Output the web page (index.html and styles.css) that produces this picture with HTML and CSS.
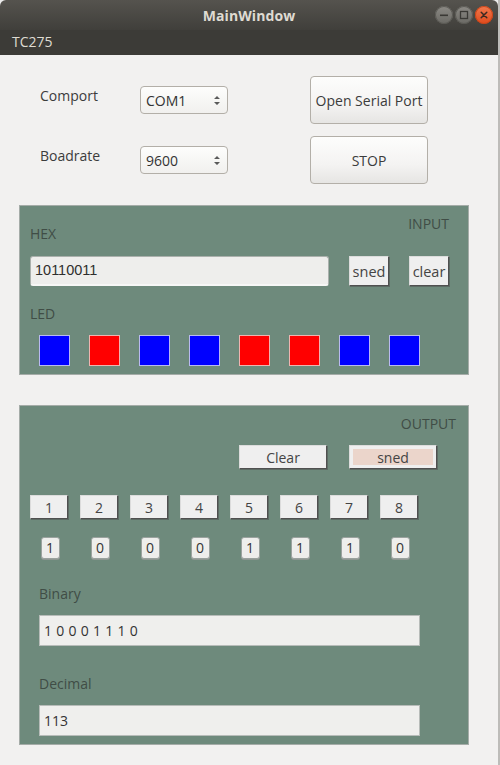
FILE: index.html
```html
<!DOCTYPE html>
<html>
<head>
<meta charset="utf-8">
<title>MainWindow</title>
<link rel="stylesheet" href="styles.css">
</head>
<body>
<div class="screen">
  <div class="window">
    <header class="titlebar">
      <div></div>
      <div class="title">MainWindow</div>
      <div class="controls">
        <span class="wbtn min"><svg width="18" height="18" viewBox="0 0 18 18"><rect x="5" y="8.5" width="8" height="1.6" fill="#3a3935"/></svg></span>
        <span class="wbtn max"><svg width="18" height="18" viewBox="0 0 18 18"><rect x="5.5" y="5.5" width="7" height="7" fill="none" stroke="#3a3935" stroke-width="1.3"/></svg></span>
        <span class="wbtn close"><svg width="18" height="18" viewBox="0 0 18 18"><path d="M6.2 6.2 L11.8 11.8 M11.8 6.2 L6.2 11.8" stroke="#3a2a22" stroke-width="1.5" stroke-linecap="round"/></svg></span>
      </div>
    </header>
    <nav class="menubar"><span class="menu-item">TC275</span></nav>

    <main class="content">
      <section class="settings">
        <div class="lbl">Comport</div>
        <div class="combo"><span>COM1</span><svg class="spin" width="8" height="13" viewBox="0 0 8 13"><path d="M1 5 L4 2 L7 5 Z M1 8 L4 11 L7 8 Z" fill="#5a5a5a"/></svg></div>
        <button class="big-btn">Open Serial Port</button>

        <div class="lbl">Boadrate</div>
        <div class="combo"><span>9600</span><svg class="spin" width="8" height="13" viewBox="0 0 8 13"><path d="M1 5 L4 2 L7 5 Z M1 8 L4 11 L7 8 Z" fill="#5a5a5a"/></svg></div>
        <button class="big-btn">STOP</button>
      </section>

      <section class="panel input-panel">
        <div class="in-head">
          <span class="plabel hex">HEX</span>
          <span class="plabel">INPUT</span>
        </div>
        <div class="in-row">
          <div class="hex-field">10110011</div>
          <button class="flat-btn small">sned</button>
          <button class="flat-btn small">clear</button>
        </div>
        <div class="plabel led-label">LED</div>
        <div class="leds">
          <span class="led blue"></span>
          <span class="led red"></span>
          <span class="led blue"></span>
          <span class="led blue"></span>
          <span class="led red"></span>
          <span class="led red"></span>
          <span class="led blue"></span>
          <span class="led blue"></span>
        </div>
      </section>

      <section class="panel output-panel">
        <div class="out-head"><span class="plabel">OUTPUT</span></div>
        <div class="out-actions">
          <button class="flat-btn wide">Clear</button>
          <button class="flat-btn wide pink">sned</button>
        </div>
        <div class="bits">
          <button class="flat-btn bit">1</button>
          <button class="flat-btn bit">2</button>
          <button class="flat-btn bit">3</button>
          <button class="flat-btn bit">4</button>
          <button class="flat-btn bit">5</button>
          <button class="flat-btn bit">6</button>
          <button class="flat-btn bit">7</button>
          <button class="flat-btn bit">8</button>
        </div>
        <div class="vals">
          <span class="cell"><span class="val">1</span></span>
          <span class="cell"><span class="val">0</span></span>
          <span class="cell"><span class="val">0</span></span>
          <span class="cell"><span class="val">0</span></span>
          <span class="cell"><span class="val">1</span></span>
          <span class="cell"><span class="val">1</span></span>
          <span class="cell"><span class="val">1</span></span>
          <span class="cell"><span class="val">0</span></span>
        </div>
        <div class="plabel field-label first">Binary</div>
        <div class="field binary">1 0 0 0 1 1 1 0</div>
        <div class="plabel field-label">Decimal</div>
        <div class="field">113</div>
      </section>
    </main>
  </div>
  <div class="edge"></div>
</div>
</body>
</html>
```

FILE: styles.css
```css
* { box-sizing: border-box; }

html, body {
  margin: 0;
  padding: 0;
  background: #ececec;
}

body {
  font-family: "Open Sans", "Noto Sans", sans-serif;
  font-size: 14px;
  color: #3c3c3c;
}

.screen {
  display: flex;
  width: 500px;
  height: 765px;
  overflow: hidden;
}

.window {
  width: 498px;
  height: 765px;
  background: #f2f1f0;
  border-radius: 6px 6px 0 0;
  overflow: hidden;
}

.edge {
  width: 2px;
  height: 765px;
  background: #bdbcb9;
}

/* title bar */
.titlebar {
  height: 30px;
  display: grid;
  grid-template-columns: 1fr auto 1fr;
  align-items: center;
  background: linear-gradient(#55534e, #403f3b);
}

.title {
  font-weight: bold;
  font-size: 14px;
  color: #dfdbd2;
  letter-spacing: 0.1px;
}

.controls {
  justify-self: end;
  display: flex;
  gap: 2px;
  padding-right: 5px;
}

.wbtn {
  width: 18px;
  height: 18px;
  border-radius: 50%;
  display: flex;
  background: linear-gradient(#8c8a85, #6a6964);
  box-shadow: inset 0 0 0 1px #5a5954;
}

.wbtn.close {
  background: linear-gradient(#f27a4e, #df4a1c);
  box-shadow: inset 0 0 0 1px #c84418;
}

.menubar {
  height: 25px;
  background: #3c3b37;
  display: flex;
  align-items: center;
  padding-left: 12px;
  padding-bottom: 3px;
}

.menu-item {
  color: #dfdbd2;
  font-size: 14px;
}

/* settings */
.settings {
  display: grid;
  grid-template-columns: 100px 170px 118px;
  grid-auto-rows: 48px;
  row-gap: 12px;
  padding: 21px 0 0 40px;
}

.lbl {
  align-self: start;
  margin-top: 10px;
  line-height: 20px;
  color: #3c3c3c;
}

.combo {
  align-self: center;
  width: 88px;
  height: 28px;
  border: 1px solid #b3afa8;
  border-radius: 4px;
  background: linear-gradient(#fdfdfc, #f1f0ee);
  display: flex;
  align-items: center;
  justify-content: space-between;
  padding: 0 6px 0 5px;
  color: #333;
  font-size: 14px;
}

.big-btn {
  font-family: inherit;
  font-size: 14px;
  color: #3c3c3c;
  width: 118px;
  height: 48px;
  border: 1px solid #b3afa8;
  border-radius: 4px;
  background: linear-gradient(#fdfdfc 0%, #f4f3f2 60%, #e6e5e3 100%);
  padding: 0;
}

/* panels */
.panel {
  margin-left: 19px;
  width: 450px;
  background: #6e8a7c;
  border: 1px solid #a5aca8;
}

.plabel {
  color: #404d46;
  font-size: 14px;
  line-height: 16px;
}

.input-panel {
  margin-top: 21px;
  height: 170px;
  padding: 10px 19px 0 10px;
}

.in-head {
  height: 26px;
  display: flex;
  justify-content: space-between;
}

.in-head .hex { align-self: flex-end; }

.in-row {
  margin-top: 14px;
  display: flex;
  gap: 20px;
  height: 30px;
}

.hex-field {
  width: 299px;
  height: 30px;
  border-radius: 3px;
  background: #eeeeec;
  border: 1px solid #aab0ac;
  border-bottom: 2px solid #f7f7f6;
  font-family: "Liberation Sans", Arial, sans-serif;
  font-size: 14.5px;
  color: #2e2e2e;
  line-height: 27px;
  padding-left: 4px;
}

.flat-btn {
  font-family: inherit;
  font-size: 14px;
  color: #444;
  background: #efefef;
  border: 1px solid #dcdcdc;
  border-right-color: #505050;
  border-bottom-color: #505050;
  box-shadow: 1px 1px 0 #5d6b64;
  padding: 0;
}

.flat-btn.small {
  width: 40px;
  height: 30px;
  font-size: 14.5px;
}

.led-label {
  margin-top: 20px;
}

.leds {
  margin-top: 13px;
  padding-left: 9px;
  display: flex;
  gap: 19px;
}

.led {
  width: 31px;
  height: 31px;
  display: block;
}

.led.blue {
  background: #0000ff;
  border: 1px solid #b9b9f2;
}

.led.red {
  background: #ff0000;
  border: 1px solid #f0b4b0;
}

/* output panel */
.output-panel {
  margin-top: 30px;
  height: 340px;
  padding-top: 10px;
}

.out-head {
  display: flex;
  justify-content: flex-end;
  padding-right: 12px;
}

.out-actions {
  margin-top: 13px;
  display: flex;
  justify-content: flex-end;
  gap: 22px;
  padding-right: 31px;
}

.flat-btn.wide {
  width: 88px;
  height: 24px;
}

.flat-btn.pink {
  background: #ebd5cb;
  box-shadow: inset 0 0 0 3px #efefef, 1px 1px 0 #5d6b64;
}

.bits {
  margin-top: 26px;
  padding-left: 10px;
  display: flex;
  gap: 12px;
}

.flat-btn.bit {
  width: 38px;
  height: 24px;
}

.vals {
  margin-top: 18px;
  padding-left: 10px;
  display: flex;
  gap: 12px;
}

.cell {
  width: 38px;
  display: flex;
  justify-content: center;
}

.val {
  width: 19px;
  height: 22px;
  margin-left: 2px;
  border-radius: 3px;
  background: #eeeeec;
  border: 1px solid #9aa29e;
  box-shadow: 0 1px 0 #8f9893;
  text-align: center;
  line-height: 20px;
  font-size: 14px;
  color: #333;
}

.field-label {
  margin-top: 27px;
  padding-left: 19px;
}

.field-label + .field { margin-top: 13px; }

.field-label.first ~ .field-label { margin-top: 30px; }

.field {
  margin-left: 19px;
  width: 381px;
  height: 31px;
  background: #efefed;
  border: 1px solid #b7bcb9;
  line-height: 29px;
  padding-left: 4px;
  font-size: 14px;
  color: #333;
}

.field.binary {
  letter-spacing: 0.3px;
}
```
